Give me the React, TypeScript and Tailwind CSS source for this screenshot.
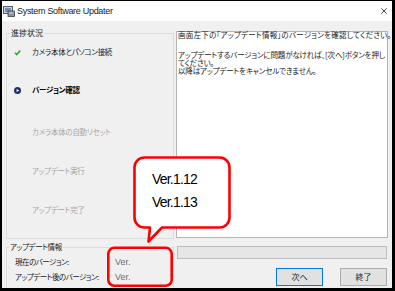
import React from 'react';

const jp = "font-['Noto_Sans_CJK_JP',sans-serif] [font-feature-settings:'palt']";

const steps = [
  { label: 'カメラ本体とパソコン接続', state: 'done', mt: 'mt-[9px]' },
  { label: 'バージョン確認', state: 'active', mt: 'mt-[28px]' },
  { label: 'カメラ本体の自動リセット', state: 'todo', mt: 'mt-[32px]' },
  { label: 'アップデート実行', state: 'todo', mt: 'mt-[29px]' },
  { label: 'アップデート完了', state: 'todo', mt: 'mt-[29px]' },
];

const StepIcon = ({ state }: { state: string }) => {
  if (state === 'done') {
    return (
      <svg width="7" height="7" viewBox="0 0 7 7">
        <polyline points="1,3.8 2.7,5.6 6.3,1.4" fill="none" stroke="#25b025" strokeWidth="1.6" />
      </svg>
    );
  }
  if (state === 'active') {
    return (
      <svg width="7" height="7" viewBox="0 0 7 7">
        <circle cx="3.5" cy="3.5" r="3.5" fill="#1c3170" />
        <polygon points="2.6,1.9 5.2,3.5 2.6,5.1" fill="#ffffff" />
      </svg>
    );
  }
  return <span className="w-[7px]" />;
};

const App: React.FC = () => {
  return (
    <div className="relative w-[395px] h-[291px] bg-black pt-px pl-[2px] pr-[3px] pb-[3px] overflow-hidden">
      <div className="w-full h-full bg-[#f0f0f0] flex flex-col overflow-hidden">
        {/* Title bar */}
        <div className="h-[20px] bg-white flex items-center shrink-0">
          <svg className="ml-[1px]" width="12" height="11" viewBox="0 0 12 11">
            <rect x="0.5" y="0.5" width="9" height="7" fill="#c9ccd1" stroke="#5a5f66" />
            <rect x="2" y="2" width="6" height="4" fill="#6f8fb5" />
            <rect x="5" y="5" width="6.5" height="5.5" fill="#8d9096" stroke="#3f4247" strokeWidth="0.8" />
            <rect x="6.5" y="6.5" width="3.5" height="1" fill="#e2e4e8" />
          </svg>
          <span className="ml-[2px] text-[9px] leading-[12px] tracking-[-0.3px] text-[#1a1a1a] font-['Liberation_Sans',sans-serif]">
            System Software Updater
          </span>
          <div className="flex-1" />
          <svg className="mr-[5px]" width="6" height="6" viewBox="0 0 6 6">
            <path d="M0.3 0.3 L5.7 5.7 M5.7 0.3 L0.3 5.7" stroke="#222" strokeWidth="0.8" />
          </svg>
        </div>

        {/* Upper area */}
        <div className="flex mt-[7px] shrink-0">
          <fieldset className={`ml-[4px] w-[168px] h-[211px] border border-[#dcdcdc] ${jp}`}>
            <legend className="ml-[3px] px-px text-[8px] leading-[10px] text-[#1a1a1a]">進捗状況</legend>
            {steps.map(s => (
              <div key={s.label} className={`${s.mt} h-[10px] flex items-center pl-[7px]`}>
                <StepIcon state={s.state} />
                <span
                  className={`ml-[11px] text-[7.5px] leading-[10px] tracking-[-0.3px] whitespace-nowrap ${
                    s.state === 'active'
                      ? 'font-bold text-black'
                      : s.state === 'done'
                      ? 'text-[#1a1a1a]'
                      : 'text-[#a6a6a6]'
                  }`}
                >
                  {s.label}
                </span>
              </div>
            ))}
          </fieldset>

          <div className={`ml-[2px] mt-[3px] w-[212px] h-[207px] bg-white border border-[#b4b4b4] pl-px text-[7.5px] leading-[8px] tracking-[-0.15px] text-[#1a1a1a] whitespace-nowrap ${jp}`}>
            <p className="mt-[-1px] tracking-[0.25px]">画面左下の「アップデート情報」のバージョンを確認してください。</p>
            <p className="mt-[12px]">
              アップデートするバージョンに問題がなければ、[次へ]ボタンを押し
              <br />
              てください。
              <br />
              以降はアップデートをキャンセルできません。
            </p>
          </div>
        </div>

        {/* Lower area */}
        <div className="flex mt-[3px] shrink-0">
          <fieldset className={`ml-[4px] w-[168px] h-[60px] border border-[#dcdcdc] ${jp}`}>
            <legend className="ml-[2px] px-px text-[7.5px] leading-[10px] tracking-[-0.4px] text-[#1a1a1a]">アップデート情報</legend>
            <div className="mt-[5px] h-[10px] flex items-center pl-[8px]">
              <span className="w-[100px] text-[7.5px] leading-[10px] tracking-[-0.5px] text-[#1a1a1a]">現在のバージョン:</span>
              <span className="text-[9px] leading-[10px] text-[#6d6d6d] font-['Liberation_Sans',sans-serif]">Ver.</span>
            </div>
            <div className="mt-[5px] h-[10px] flex items-center pl-[8px]">
              <span className="w-[100px] text-[7.5px] leading-[10px] tracking-[-0.5px] text-[#1a1a1a] whitespace-nowrap">アップデート後のバージョン:</span>
              <span className="text-[9px] leading-[10px] text-[#6d6d6d] font-['Liberation_Sans',sans-serif]">Ver.</span>
            </div>
          </fieldset>

          <div className={`ml-[3px] w-[211px] pr-px flex flex-col ${jp}`}>
            <div className="mt-[4px] h-[13px] bg-[#e6e6e6] border border-[#bcbcbc]" />
            <div className="mt-[9px] flex justify-end gap-[17px]">
              <button className="w-[47px] h-[18px] bg-[#e1e1e1] border border-[#0078d7] text-[8px] leading-[10px] text-[#1a1a1a]">
                次へ
              </button>
              <button className="w-[47px] h-[18px] bg-[#e1e1e1] border border-[#adadad] text-[8px] leading-[10px] text-[#1a1a1a]">
                終了
              </button>
            </div>
          </div>
        </div>
      </div>

      {/* Red annotations */}
      <svg className="absolute left-0 top-0 pointer-events-none" width="395" height="291" viewBox="0 0 395 291">
        <path
          d="M144.5 157.5 H219.5 A10 10 0 0 1 229.5 167.5 V217.5 A10 10 0 0 1 219.5 227.5 H162 L148.5 241.5 L150 227.5 H144.5 A10 10 0 0 1 134.5 217.5 V167.5 A10 10 0 0 1 144.5 157.5 Z"
          fill="#ffffff"
          stroke="#ff0000"
          strokeWidth="2.6"
          strokeLinejoin="round"
        />
        <rect x="108.3" y="247.8" width="63.4" height="38" rx="6" fill="none" stroke="#ff0000" strokeWidth="2.6" />
      </svg>
      <div className="absolute left-[152px] top-[168px] flex flex-col text-[14px] leading-[23px] tracking-[-0.8px] text-black font-['Liberation_Sans',sans-serif]">
        <span>Ver.1.12</span>
        <span>Ver.1.13</span>
      </div>
    </div>
  );
};

export default App;
